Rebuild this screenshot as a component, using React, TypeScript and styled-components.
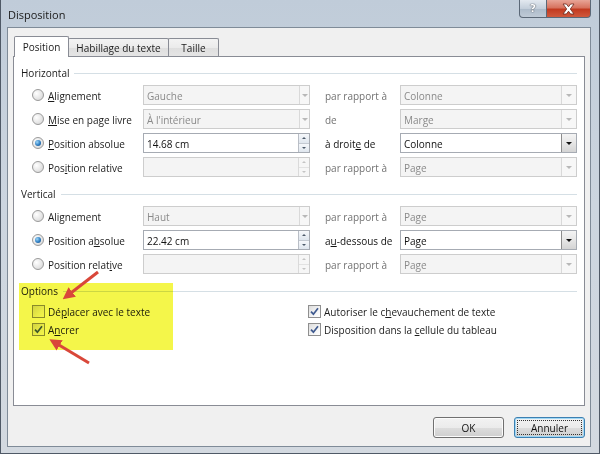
import * as React from 'react';
import styled, { createGlobalStyle, css } from 'styled-components';

const GlobalStyle = createGlobalStyle`
  html, body { margin: 0; padding: 0; }
  body {
    width: 600px;
    height: 454px;
    overflow: hidden;
    font-family: "Open Sans", "Noto Sans", sans-serif;
    font-size: 10px;
    color: #1b1b1b;
  }
`;

const Window = styled.div`
  position: relative;
  width: 600px;
  height: 454px;
  box-sizing: border-box;
  display: flex;
  flex-direction: column;
  background: linear-gradient(180deg, #c0ccd9 0%, #ccd5df 45%, #d3d9e0 100%);
  border-left: 1px solid #4f5966;
  border-right: 1px solid #4f5966;
  border-bottom: 1px solid #4f5966;
`;

const TitleBar = styled.div`
  height: 27px;
  flex-shrink: 0;
  display: flex;
  align-items: flex-start;
  padding-left: 7px;
`;

const Title = styled.span`
  font-size: 11px;
  line-height: 16px;
  padding-top: 7px;
  color: #1a1a1a;
`;

const Controls = styled.div`
  margin-left: auto;
  margin-right: 8px;
  display: flex;
`;

const CapButton = styled.div<{ $close?: boolean }>`
  height: 18px;
  box-sizing: border-box;
  display: flex;
  align-items: center;
  justify-content: center;
  border: 1px solid #5b6877;
  border-top: none;
  ${(p) =>
    p.$close
      ? css`
          width: 44px;
          border-left: none;
          border-radius: 0 0 4px 0;
          background: linear-gradient(180deg, #e8a597 0%, #d7735f 45%, #c23a20 55%, #d0593d 100%);
        `
      : css`
          width: 28px;
          border-radius: 0 0 0 4px;
          background: linear-gradient(180deg, #e3e9f0 0%, #c4cfdb 50%, #aebccb 55%, #bfcad6 100%);
        `}
`;

const Help = styled.span`
  font-family: "DejaVu Sans", sans-serif;
  font-weight: bold;
  font-size: 11px;
  color: #fff;
  text-shadow: 0 0 1px #3a4450, 0 0 1px #3a4450;
`;

const Body = styled.div`
  flex: 1;
  margin: 0 8px 6px 6px;
  border: 1px solid #7f8b98;
  background: #f0f0f0;
  padding: 9px 5px 0 5px;
  display: flex;
  flex-direction: column;
`;

const TabRow = styled.div`
  height: 20px;
  display: flex;
  align-items: flex-end;
  padding-left: 1px;
  margin-bottom: -1px;
  position: relative;
  z-index: 1;
`;

const Tab = styled.div<{ $active?: boolean; $w: number }>`
  width: ${(p) => p.$w}px;
  box-sizing: border-box;
  border: 1px solid #898c95;
  border-bottom: none;
  border-radius: 2px 2px 0 0;
  display: flex;
  align-items: center;
  justify-content: center;
  font-size: 10px;
  margin-right: -1px;
  ${(p) =>
    p.$active
      ? css`
          height: 21px;
          background: #fff;
          position: relative;
          z-index: 2;
        `
      : css`
          height: 18px;
          margin-bottom: 1px;
          padding-top: 1px;
          background: linear-gradient(180deg, #f3f3f3 0%, #ebebeb 50%, #dedede 51%, #e5e5e5 100%);
        `}
`;

const Panel = styled.div`
  height: 350px;
  box-sizing: border-box;
  border: 1px solid #898c95;
  background: #fff;
  padding: 7px 7px 0 7px;
`;

const GroupHead = styled.div<{ $gap?: number }>`
  height: 17px;
  display: flex;
  align-items: center;
  padding-top: 1px;
  box-sizing: border-box;
  margin-top: ${(p) => p.$gap ?? 0}px;
  &::after {
    content: '';
    flex: 1;
    height: 1px;
    margin-left: 5px;
    background: #d5dfe5;
  }
`;

const Rows = styled.div`
  margin-top: 4px;
  padding-left: 11px;
  display: grid;
  grid-template-columns: 111px 167px 90px 177px;
  grid-auto-rows: 20px;
  row-gap: 4px;
`;

const Choice = styled.div`
  display: flex;
  align-items: center;
  gap: 4px;
  white-space: nowrap;
  & > span:last-child {
    padding-top: 1px;
  }
`;

const Radio = styled.span<{ $on?: boolean }>`
  width: 12px;
  height: 12px;
  box-sizing: border-box;
  border-radius: 50%;
  border: 1px solid #9a9a9a;
  background: radial-gradient(circle at 35% 35%, #ffffff 0%, #e4e4e4 60%, #cfcfcf 100%);
  display: flex;
  align-items: center;
  justify-content: center;
  flex-shrink: 0;
  &::after {
    content: '';
    display: ${(p) => (p.$on ? 'block' : 'none')};
    width: 6px;
    height: 6px;
    border-radius: 50%;
    background: radial-gradient(circle at 35% 35%, #9fd7f8 0%, #2d7dc2 55%, #17457a 100%);
  }
`;

const Field = styled.div<{ $off?: boolean }>`
  display: flex;
  height: 20px;
  box-sizing: border-box;
  border: 1px solid ${(p) => (p.$off ? '#cdcdcd' : '#a6abb3')};
  background: ${(p) => (p.$off ? '#f4f4f4' : '#fff')};
`;

const FieldText = styled.span<{ $off?: boolean }>`
  flex: 1;
  padding-left: 3px;
  padding-top: 1px;
  line-height: 18px;
  color: ${(p) => (p.$off ? '#8a8a8a' : '#111')};
  white-space: nowrap;
  overflow: hidden;
`;

const DropBtn = styled.span<{ $off?: boolean; $w: number }>`
  width: ${(p) => p.$w}px;
  box-sizing: border-box;
  display: flex;
  align-items: center;
  justify-content: center;
  border-left: 1px solid ${(p) => (p.$off ? '#d9d9d9' : '#8c8c8c')};
  background: ${(p) =>
    p.$off ? '#f7f7f7' : 'linear-gradient(180deg, #f4f4f4 0%, #e6e6e6 50%, #d4d4d4 100%)'};
  &::after {
    content: '';
    border-left: 3px solid transparent;
    border-right: 3px solid transparent;
    border-top: 3px solid ${(p) => (p.$off ? '#b8b8b8' : '#111')};
  }
`;

const Spin = styled.span<{ $off?: boolean }>`
  width: 10px;
  display: flex;
  flex-direction: column;
  border-left: 1px solid ${(p) => (p.$off ? '#dadada' : '#b9bec6')};
`;

const SpinHalf = styled.span<{ $off?: boolean; $up?: boolean }>`
  flex: 1;
  display: flex;
  align-items: center;
  justify-content: center;
  background: ${(p) => (p.$off ? '#f6f6f6' : 'linear-gradient(180deg, #f6f8fb, #dfe6ee)')};
  ${(p) => p.$up && css`border-bottom: 1px solid ${p.$off ? '#e2e2e2' : '#c3c9d1'};`}
  &::after {
    content: '';
    border-left: 2px solid transparent;
    border-right: 2px solid transparent;
    ${(p) =>
      p.$up
        ? css`border-bottom: 2px solid ${p.$off ? '#c4c4c4' : '#4d5a6a'};`
        : css`border-top: 2px solid ${p.$off ? '#c4c4c4' : '#4d5a6a'};`}
  }
`;

const Mid = styled.span<{ $off?: boolean }>`
  padding-left: 15px;
  padding-top: 1px;
  line-height: 20px;
  white-space: nowrap;
  color: ${(p) => (p.$off ? '#727272' : '#111')};
`;

const Options = styled.div`
  margin-top: 3px;
  padding-left: 11px;
  display: grid;
  grid-template-columns: 276px 1fr;
  grid-auto-rows: 18px;
`;

const Check = styled.span`
  width: 13px;
  height: 13px;
  box-sizing: border-box;
  border: 1px solid #8f8f8f;
  background: linear-gradient(135deg, #dcdcdc 0%, #f4f4f4 60%, #ffffff 100%);
  display: flex;
  align-items: center;
  justify-content: center;
  flex-shrink: 0;
`;

const CheckRow = styled.div`
  display: flex;
  align-items: center;
  gap: 3px;
  white-space: nowrap;
  & > span:last-child {
    padding-top: 1px;
  }
`;

const Footer = styled.div`
  display: flex;
  justify-content: flex-end;
  gap: 10px;
  margin-top: 11px;
`;

const Button = styled.div<{ $default?: boolean }>`
  width: 71px;
  height: 21px;
  box-sizing: border-box;
  border: 1px solid ${(p) => (p.$default ? '#3c7fb1' : '#707070')};
  border-radius: 3px;
  background: linear-gradient(180deg, #f2f2f2 0%, #ebebeb 50%, #dddddd 51%, #cfcfcf 100%);
  box-shadow: inset 0 0 0 1px ${(p) => (p.$default ? '#9fd8f6' : '#fbfbfb')};
  display: flex;
  align-items: center;
  justify-content: center;
  padding: 2px;
  color: #111;
`;

const Focus = styled.span`
  flex: 1;
  align-self: stretch;
  display: flex;
  align-items: center;
  justify-content: center;
  border: 1px dotted #333;
`;

const Highlight = styled.div`
  position: absolute;
  left: 18px;
  top: 283px;
  width: 154px;
  height: 67px;
  background: #f4f64a;
  mix-blend-mode: multiply;
  pointer-events: none;
`;

const Marks = styled.svg`
  position: absolute;
  left: 0;
  top: 0;
  pointer-events: none;
`;

const U = styled.span`
  text-decoration: underline;
`;

function Tick() {
  return (
    <svg width="9" height="9" viewBox="0 0 9 9">
      <path d="M1 4.6 L3.4 7.2 L8 1.2" fill="none" stroke="#3f5a8f" strokeWidth="1.7" />
    </svg>
  );
}

function Select({ value, off, w = 15 }: { value: string; off?: boolean; w?: number }) {
  return (
    <Field $off={off}>
      <FieldText $off={off}>{value}</FieldText>
      <DropBtn $off={off} $w={w} />
    </Field>
  );
}

function Spinner({ value, off }: { value: string; off?: boolean }) {
  return (
    <Field $off={off}>
      <FieldText $off={off}>{value}</FieldText>
      <Spin $off={off}>
        <SpinHalf $off={off} $up />
        <SpinHalf $off={off} />
      </Spin>
    </Field>
  );
}

export default function App() {
  return (
    <Window>
      <GlobalStyle />
      <TitleBar>
        <Title>Disposition</Title>
        <Controls>
          <CapButton>
            <Help>?</Help>
          </CapButton>
          <CapButton $close>
            <svg width="15" height="12" viewBox="0 0 15 12">
              <path
                d="M2 1 L5.4 1 L7.5 3.8 L9.6 1 L13 1 L9.3 6 L13 11 L9.6 11 L7.5 8.2 L5.4 11 L2 11 L5.7 6 Z"
                fill="#fff"
                stroke="#6a2a1e"
                strokeWidth="0.8"
              />
            </svg>
          </CapButton>
        </Controls>
      </TitleBar>

      <Body>
        <TabRow>
          <Tab $active $w={55}>Position</Tab>
          <Tab $w={101}>Habillage du texte</Tab>
          <Tab $w={51}>Taille</Tab>
        </TabRow>
        <Panel>
          <GroupHead>Horizontal</GroupHead>
          <Rows>
            <Choice>
              <Radio />
              <span><U>A</U>lignement</span>
            </Choice>
            <Select value="Gauche" off w={10} />
            <Mid $off>par rapport à</Mid>
            <Select value="Colonne" off />

            <Choice>
              <Radio />
              <span><U>M</U>ise en page livre</span>
            </Choice>
            <Select value="À l'intérieur" off w={10} />
            <Mid $off>de</Mid>
            <Select value="Marge" off />

            <Choice>
              <Radio $on />
              <span><U>P</U>osition absolue</span>
            </Choice>
            <Spinner value="14.68 cm" />
            <Mid>à droit<U>e</U> de</Mid>
            <Select value="Colonne" />

            <Choice>
              <Radio />
              <span>Pos<U>i</U>tion relative</span>
            </Choice>
            <Spinner value="" off />
            <Mid $off>par rapport à</Mid>
            <Select value="Page" off />
          </Rows>

          <GroupHead $gap={8}>Vertical</GroupHead>
          <Rows>
            <Choice>
              <Radio />
              <span>Alignement</span>
            </Choice>
            <Select value="Haut" off w={10} />
            <Mid $off>par rapport à</Mid>
            <Select value="Page" off />

            <Choice>
              <Radio $on />
              <span>Position a<U>b</U>solue</span>
            </Choice>
            <Spinner value="22.42 cm" />
            <Mid>a<U>u</U>-dessous de</Mid>
            <Select value="Page" />

            <Choice>
              <Radio />
              <span>Position relat<U>i</U>ve</span>
            </Choice>
            <Spinner value="" off />
            <Mid $off>par rapport à</Mid>
            <Select value="Page" off />
          </Rows>

          <GroupHead $gap={8}>Options</GroupHead>
          <Options>
            <CheckRow>
              <Check />
              <span>Dé<U>p</U>lacer avec le texte</span>
            </CheckRow>
            <CheckRow>
              <Check>
                <Tick />
              </Check>
              <span>Autoriser le c<U>h</U>evauchement de texte</span>
            </CheckRow>
            <CheckRow>
              <Check>
                <Tick />
              </Check>
              <span>A<U>n</U>crer</span>
            </CheckRow>
            <CheckRow>
              <Check>
                <Tick />
              </Check>
              <span>Disposition dans la <U>c</U>ellule du tableau</span>
            </CheckRow>
          </Options>
        </Panel>
        <Footer>
          <Button>OK</Button>
          <Button $default>
            <Focus>Annuler</Focus>
          </Button>
        </Footer>
      </Body>

      <Highlight />
      <Marks width="600" height="454" viewBox="0 0 600 454">
        <defs>
          <marker id="head" markerWidth="4" markerHeight="4" refX="2.2" refY="2" orient="auto" markerUnits="strokeWidth">
            <path d="M0 0 L4 2 L0 4 Z" fill="#d9473a" />
          </marker>
        </defs>
        <line x1="97" y1="272" x2="66" y2="296" stroke="#d9473a" strokeWidth="3" markerEnd="url(#head)" />
        <line x1="88" y1="363" x2="53" y2="342" stroke="#d9473a" strokeWidth="3" markerEnd="url(#head)" />
      </Marks>
    </Window>
  );
}
